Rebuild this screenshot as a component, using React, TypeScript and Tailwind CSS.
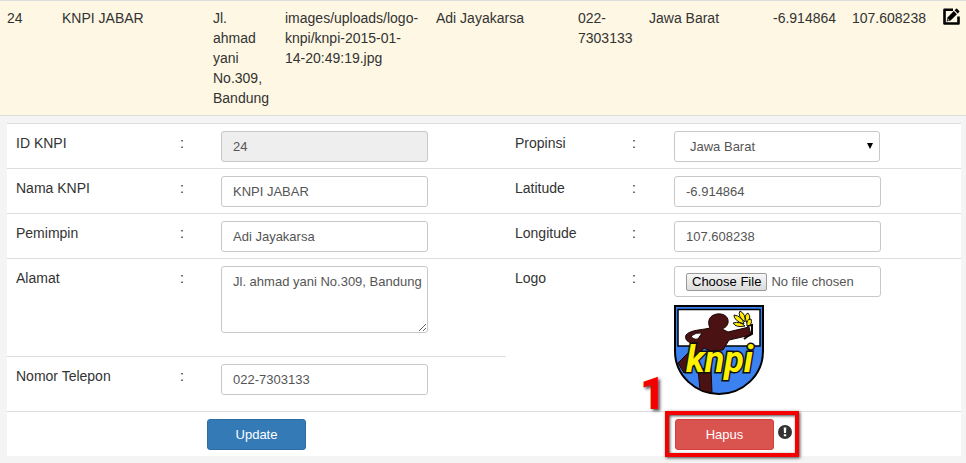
import type { ReactNode } from "react";

const control =
  "block h-[31px] w-[207px] rounded-[3px] border border-[#c8c8c8] bg-white px-[11px] text-[13px] leading-5 text-[#555]";

function Field({
  id,
  label,
  side,
  className = "",
  children,
}: {
  id: string;
  label: string;
  side: "left" | "right";
  className?: string;
  children: ReactNode;
}) {
  const cols = side === "left" ? "grid-cols-[165px_41px_1fr]" : "grid-cols-[118px_42px_1fr]";
  return (
    <div className={`grid ${cols} border-t border-[#ddd] pt-[7px] pb-[6px] ${className}`}>
      <label htmlFor={id} className="pl-[9px] leading-6">
        {label}
      </label>
      <span className="pl-2 leading-6">:</span>
      <div className="pl-2">{children}</div>
    </div>
  );
}

function EditIcon() {
  return (
    <svg viewBox="0 0 17 17" className="block size-[17px]" aria-hidden="true">
      <path d="M10 1.700H1.500V15.500H15.500V8.500" fill="none" stroke="#000" strokeWidth="2.600" strokeLinejoin="round" />
      <path d="M3.600 13.500l.9-4.100 6.300-6.300 3.100 3.100-6.300 6.300z" fill="#000" />
      <path d="M11.600 2.300l1.500-1.500q.5-.5 1 0l2.100 2.100q.5.5 0 1l-1.500 1.500z" fill="#000" />
      <path d="M4.900 10.700l1.500 1.500-1.800.4z" fill="#fdf7e3" />
    </svg>
  );
}

function KnpiLogo() {
  return (
    <svg viewBox="0 0 90 90" className="mt-2 block size-[90px]" role="img" aria-label="Logo KNPI">
      <path d="M1 1H89V46C89 71 68 89 45 89S1 71 1 46Z" fill="#3b82f0" stroke="#000" strokeWidth="2" />
      <path d="M4 4.500H86V41H4Z" fill="#fff" stroke="#000" strokeWidth="1.500" />
      <g fill="#4b1214" stroke="#140404" strokeWidth="1">
        <path d="M36 23C33 17 35 10 43 9C51 8 55 13 54 18C53 22 50 23 48 24L54 27L75 22L77 30L55 35L49 45L36 46L30 43L17 58L10 68L4 58L20 42L24 38C16 39 10 36 12 30C15 26 24 25 31 24Z" />
        <path d="M24 64L37 63L38 88L26 85Z" />
      </g>
      <path d="M17 31Q22 27 28 28L24 34Q19 35 17 31Z" fill="#fff" stroke="#140404" strokeWidth="1" />
      <path d="M73 21L78 20V29L74 31L70 34" fill="none" stroke="#140404" strokeWidth="2" />
      <g fill="#ffec00" stroke="#111" strokeWidth="1">
        <path d="M71 21Q62 23 59 18Q66 16 71 21Z" />
        <path d="M70 19Q60 16 60 10Q68 11 70 19Z" />
        <path d="M71 17Q63 11 66 6Q72 9 71 17Z" />
        <path d="M73 18Q69 10 74 8Q78 13 73 18Z" />
        <path d="M73 21Q72 14 77 14Q79 20 73 21Z" />
      </g>
      <text
        x="12"
        y="67"
        fill="#fff200"
        stroke="#111"
        strokeWidth="3"
        paintOrder="stroke"
        className="font-[Roboto,sans-serif] text-[36px] font-bold italic"
      >
        knpi
      </text>
    </svg>
  );
}

export default function App() {
  return (
    <main className="min-h-screen bg-[#f4f4f4] font-['Liberation_Sans',Arial,sans-serif] text-[14px] leading-5 text-[#333]">
      <table className="w-full table-fixed border-separate border-spacing-0 bg-[#fdf7e3]">
        <colgroup>
          <col className="w-[55px]" />
          <col />
          <col className="w-[72px]" />
          <col className="w-[151px]" />
          <col className="w-[142px]" />
          <col className="w-[71px]" />
          <col className="w-[124px]" />
          <col className="w-[79px]" />
          <col className="w-[91px]" />
          <col className="w-[30px]" />
        </colgroup>
        <tbody>
          <tr className="align-top *:border-y *:border-[#ddd] *:px-[7px] *:py-[7px]">
            <td>24</td>
            <td>KNPI JABAR</td>
            <td>Jl. ahmad yani No.309, Bandung</td>
            <td>
              images/uploads/logo-
              <br />
              knpi/knpi-2015-01-
              <br />
              14-20:49:19.jpg
            </td>
            <td>Adi Jayakarsa</td>
            <td>
              022-
              <wbr />
              7303133
            </td>
            <td>Jawa Barat</td>
            <td>-6.914864</td>
            <td>107.608238</td>
            <td>
              <button type="button" aria-label="Edit" className="block">
                <EditIcon />
              </button>
            </td>
          </tr>
        </tbody>
      </table>

      <form className="mt-[7px] mr-[5px] ml-[7px] bg-white" onSubmit={(e) => e.preventDefault()}>
        <div className="grid grid-cols-[499fr_455fr]">
          <div>
            <Field id="id" label="ID KNPI" side="left">
              <input id="id" className={`${control} bg-[#eee]!`} defaultValue="24" readOnly />
            </Field>
            <Field id="nama" label="Nama KNPI" side="left">
              <input id="nama" className={control} defaultValue="KNPI JABAR" />
            </Field>
            <Field id="pemimpin" label="Pemimpin" side="left">
              <input id="pemimpin" className={control} defaultValue="Adi Jayakarsa" />
            </Field>
            <Field id="alamat" label="Alamat" side="left" className="pb-[23px]!">
              <textarea
                id="alamat"
                className={`${control} h-[67px]! resize pt-[5px] pr-1!`}
                defaultValue="Jl. ahmad yani No.309, Bandung"
              />
            </Field>
            <Field id="telepon" label="Nomor Telepon" side="left" className="pb-4!">
              <input id="telepon" className={control} defaultValue="022-7303133" />
            </Field>
          </div>
          <div>
            <Field id="propinsi" label="Propinsi" side="right">
              <div className="relative w-[206px]">
                <select id="propinsi" className={`${control} w-full! appearance-none pl-[15px]!`}>
                  <option>Jawa Barat</option>
                </select>
                <svg viewBox="0 0 6 6" className="pointer-events-none absolute top-3 right-[7px] size-[6px]" aria-hidden="true">
                  <path d="M0 0H6L3 6Z" fill="#000" />
                </svg>
              </div>
            </Field>
            <Field id="latitude" label="Latitude" side="right">
              <input id="latitude" className={control} defaultValue="-6.914864" />
            </Field>
            <Field id="longitude" label="Longitude" side="right">
              <input id="longitude" className={control} defaultValue="107.608238" />
            </Field>
            <Field id="logo" label="Logo" side="right">
              <input
                id="logo"
                type="file"
                className={`${control} pt-[5px] file:mr-1 file:h-[18px] file:rounded-[2px] file:border file:border-solid file:border-[#999] file:bg-linear-to-b file:from-[#f6f6f6] file:to-[#dcdcdc] file:px-[5px] file:text-[13px] file:leading-4 file:text-black`}
              />
              <KnpiLogo />
            </Field>
          </div>
        </div>

        <div className="grid grid-cols-[499fr_455fr] border-t border-[#ddd] pt-[7px] pb-[6px]">
          <div className="flex justify-center">
            <button type="submit" className="h-[31px] w-[99px] rounded-[3px] border border-[#2e6da4] bg-[#337ab7] text-[13px] text-white">
              Update
            </button>
          </div>
          <div className="pl-[169px]">
            <div className="relative flex w-fit gap-1">
              <button type="button" className="h-[31px] w-[99px] rounded-[3px] border border-[#d43f3a] bg-[#d9534f] text-[13px] text-white">
                Hapus
              </button>
              <svg viewBox="0 0 14 14" className="mt-[6px] size-[14px]" aria-hidden="true">
                <circle cx="7" cy="7" r="7" fill="#333" />
                <path d="M5.700 2.500H8.300L8 8H6ZM5.800 9.200H8.200V11.300H5.800Z" fill="#fff" />
              </svg>
              <div className="pointer-events-none absolute -top-2 -right-[7px] -bottom-[7px] -left-[10px] border-4 border-[#f50000] shadow-[1px_1px_3px_#444,inset_1px_1px_3px_#444]" />
              <span className="pointer-events-none absolute -top-[47px] -left-[35px] font-[Roboto,sans-serif] text-[44px] leading-[44px] font-black text-[#f50000] [text-shadow:2px_2px_3px_#555]">
                1
              </span>
            </div>
          </div>
        </div>
      </form>
    </main>
  );
}
